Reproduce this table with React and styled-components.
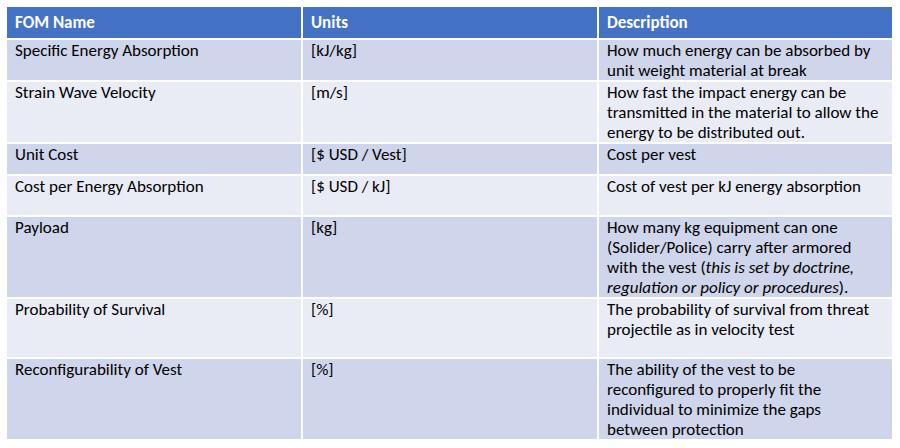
import React from "react";
import styled, { createGlobalStyle } from "styled-components";

const Global = createGlobalStyle`
  html, body { margin: 0; padding: 0; background: #ffffff; }
  body { font-family: Carlito, Lato, "Liberation Sans", sans-serif; }
`;

const Page = styled.div`
  width: 900px;
  height: 448px;
  box-sizing: border-box;
  padding: 7px 8px 0 7px;
  background: #ffffff;
`;

const Table = styled.div`
  display: flex;
  flex-direction: column;
  gap: 2px;
  width: 885px;
`;

const Row = styled.div`
  display: grid;
  grid-template-columns: 294px 294px 293px;
  column-gap: 2px;
  height: ${(p) => p.$h}px;
`;

const Cell = styled.div`
  box-sizing: border-box;
  padding: ${(p) => (p.$head ? "0 8px" : "1px 12px 0 8px")};
  background: ${(p) => (p.$head ? "#4472c4" : p.$odd ? "#cfd5ea" : "#e9ebf5")};
  color: ${(p) => (p.$head ? "#ffffff" : "#000000")};
  font-weight: ${(p) => (p.$head ? 700 : 400)};
  font-size: 17px;
  line-height: 20px;
  display: flex;
  align-items: ${(p) => (p.$head ? "center" : "flex-start")};
  overflow: hidden;
`;

const Text = styled.div`
  line-height: 20px;
`;

const rows = [
  { h: 40, name: "Specific Energy Absorption", unit: "[kJ/kg]", desc: "How much energy can be absorbed by unit weight material at break" },
  { h: 60, name: "Strain Wave Velocity", unit: "[m/s]", desc: "How fast the impact energy can be transmitted in the material to allow the energy to be distributed out." },
  { h: 30, name: "Unit Cost", unit: "[$ USD / Vest]", desc: "Cost per vest" },
  { h: 39, name: "Cost per Energy Absorption", unit: "[$ USD / kJ]", desc: "Cost of vest per kJ energy absorption" },
  {
    h: 80,
    name: "Payload",
    unit: "[kg]",
    desc: (
      <>
        How many kg equipment can one (Solider/Police) carry after armored with the vest (
        <i>this is set by doctrine, regulation or policy or procedures</i>).
      </>
    ),
  },
  { h: 58, name: "Probability of Survival", unit: "[%]", desc: "The probability of survival from threat projectile as in velocity test" },
  { h: 80, name: "Reconfigurability of Vest", unit: "[%]", desc: "The ability of the vest to be reconfigured to properly fit the individual to minimize the gaps between protection" },
];

export default function App() {
  return (
    <Page>
      <Global />
      <Table>
        <Row $h={31}>
          <Cell $head>FOM Name</Cell>
          <Cell $head>Units</Cell>
          <Cell $head>Description</Cell>
        </Row>
        {rows.map((r, i) => (
          <Row key={i} $h={r.h}>
            <Cell $odd={i % 2 === 0}>{r.name}</Cell>
            <Cell $odd={i % 2 === 0}>{r.unit}</Cell>
            <Cell $odd={i % 2 === 0}>
              <Text>{r.desc}</Text>
            </Cell>
          </Row>
        ))}
      </Table>
    </Page>
  );
}
